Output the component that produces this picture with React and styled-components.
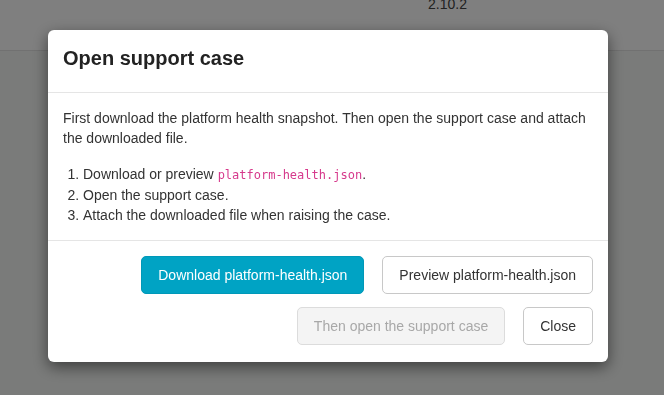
import styled, { createGlobalStyle } from "styled-components";

const GlobalStyle = createGlobalStyle`
    html, body {
        margin: 0;
        padding: 0;
        height: 100%;
    }
    body {
        font-family: "Liberation Sans", Arial, sans-serif;
        font-size: 14px;
        color: #333;
        background: #f4f6f4;
    }
`;

const Page = styled.div`
    min-height: 100vh;
    background: #f4f6f4;
`;

const TopBar = styled.header`
    height: 51px;
    background: #fff;
    border-bottom: 1px solid #e2e2e2;
    overflow: hidden;
    box-sizing: border-box;
`;

const Version = styled.span`
    display: block;
    margin: -3px 0 0 428px;
    line-height: 14px;
    font-size: 14px;
    color: #444;
`;

const Backdrop = styled.div`
    position: fixed;
    inset: 0;
    background: rgba(0, 0, 0, 0.5);
    display: flex;
    align-items: flex-start;
`;

const Dialog = styled.div`
    width: 560px;
    margin: 30px 0 0 48px;
    background: #fff;
    border-radius: 6px;
    box-shadow: 0 5px 15px rgba(0, 0, 0, 0.5);
`;

const Header = styled.div`
    padding: 15px 15px 21px;
    border-bottom: 1px solid #e5e5e5;
`;

const Title = styled.h4`
    margin: 0;
    font-size: 20px;
    font-weight: bold;
    line-height: 26px;
    color: #222;
`;

const Body = styled.div`
    padding: 15px;
    line-height: 20px;
`;

const Intro = styled.p`
    margin: 0 0 16px;
`;

const Steps = styled.ol`
    margin: 0;
    padding-left: 20px;
`;

const Code = styled.code`
    font-family: "DejaVu Sans Mono", "Liberation Mono", monospace;
    font-size: 12px;
    color: #d63a8c;
`;

const Footer = styled.div`
    padding: 15px 15px 17px;
    border-top: 1px solid #e5e5e5;
    display: flex;
    flex-wrap: wrap;
    justify-content: flex-end;
    gap: 13px 18px;
`;

const Button = styled.button`
    height: 38px;
    padding: 0 16px;
    font-family: "Liberation Sans", Arial, sans-serif;
    font-size: 14px;
    border-radius: 5px;
    border: 1px solid ${p => (p.$primary ? "#0098b8" : p.disabled ? "#dcdcdc" : "#c8c8c8")};
    background: ${p => (p.$primary ? "#00a3c4" : p.disabled ? "#f4f4f4" : "#fff")};
    color: ${p => (p.$primary ? "#fff" : p.disabled ? "#a8a8a8" : "#333")};
    cursor: ${p => (p.disabled ? "default" : "pointer")};
`;

const App = () => {
    return (
        <Page>
            <GlobalStyle />
            <TopBar>
                <Version>2.10.2</Version>
            </TopBar>
            <Backdrop>
                <Dialog>
                    <Header>
                        <Title>Open support case</Title>
                    </Header>
                    <Body>
                        <Intro>
                            First download the platform health snapshot. Then open the support case and attach the downloaded file.
                        </Intro>
                        <Steps>
                            <li>Download or preview <Code>platform-health.json</Code>.</li>
                            <li>Open the support case.</li>
                            <li>Attach the downloaded file when raising the case.</li>
                        </Steps>
                    </Body>
                    <Footer>
                        <Button $primary>Download platform-health.json</Button>
                        <Button>Preview platform-health.json</Button>
                        <Button disabled>Then open the support case</Button>
                        <Button>Close</Button>
                    </Footer>
                </Dialog>
            </Backdrop>
        </Page>
    );
};

export default App;
